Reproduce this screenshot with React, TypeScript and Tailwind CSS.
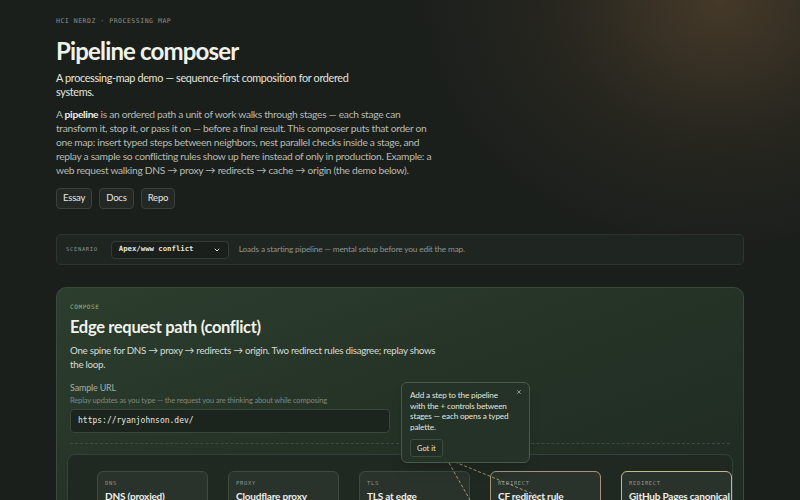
import { ChevronDown, X } from "lucide-react";

const stages = [
  { kind: "DNS", title: "DNS (proxied)", tone: "plain" },
  { kind: "PROXY", title: "Cloudflare proxy", tone: "plain" },
  { kind: "TLS", title: "TLS at edge", tone: "plain" },
  { kind: "REDIRECT", title: "CF redirect rule", tone: "warn" },
  { kind: "REDIRECT", title: "GitHub Pages canonical", tone: "warn2" },
];

const mono = "font-['DejaVu_Sans_Mono',monospace]";

function StageCard({ kind, title, tone }: { kind: string; title: string; tone: string }) {
  const border =
    tone === "warn"
      ? "border-[#a8937a]"
      : tone === "warn2"
        ? "border-[#c2b88a]"
        : "border-[#3d4a40]";
  return (
    <div className={`h-[60px] w-[111px] shrink-0 rounded-md border ${border} bg-[#2a322c] px-[7px] pt-[7px]`}>
      <div className={`${mono} text-[5.5px] leading-[8px] tracking-[0.12em] text-[#8d968d]`}>{kind}</div>
      <div className="mt-[3px] whitespace-nowrap text-[10px] font-bold leading-[12px] tracking-[-0.02em] text-[#eef0ea]">
        {title}
      </div>
    </div>
  );
}

export default function App() {
  return (
    <div className="relative h-[500px] w-[800px] overflow-hidden bg-[#1b1f1c] font-['Lato',sans-serif] text-[#e6e8e2]">
      {/* warm glow */}
      <div className="pointer-events-none absolute -right-[220px] -top-[250px] h-[500px] w-[600px] rounded-full bg-[radial-gradient(closest-side,rgba(80,64,44,0.8),rgba(60,50,36,0.35)_55%,rgba(27,31,28,0)_100%)]" />

      <div className="relative px-[56px] pt-[17px]">
        <div className={`${mono} text-[6.5px] leading-[8px] tracking-[0.08em] text-[#8b908a]`}>
          HCI NERDZ · PROCESSING MAP
        </div>
        <h1 className="mt-[11px] text-[24px] font-bold leading-[30px] tracking-[-0.035em] text-[#f0f2ec]">
          Pipeline composer
        </h1>
        <p className="mt-[5px] whitespace-nowrap text-[10.8px] leading-[14px] tracking-[-0.03em] text-[#e4e6df]">
          A processing-map demo — sequence-first composition for ordered
          <br />
          systems.
        </p>
        <p className="mt-[8px] whitespace-nowrap text-[10.25px] leading-[14px] tracking-[-0.03em] text-[#b6bab2]">
          A <b className="font-bold text-[#eef0ea]">pipeline</b> is an ordered path a unit of work walks through stages — each stage can
          <br />
          transform it, stop it, or pass it on — before a final result. This composer puts that order on
          <br />
          one map: insert typed steps between neighbors, nest parallel checks inside a stage, and
          <br />
          replay a sample so conflicting rules show up here instead of only in production. Example: a
          <br />
          web request walking DNS → proxy → redirects → cache → origin (the demo below).
        </p>
        <div className="mt-[11px] flex gap-[7px]">
          {["Essay", "Docs", "Repo"].map((l) => (
            <button
              key={l}
              className="h-[21px] rounded-[4px] border border-[#3a403b] bg-[#232825] px-[6px] text-[9.5px] tracking-[-0.02em] text-[#e6e8e2]"
            >
              {l}
            </button>
          ))}
        </div>

        {/* scenario bar */}
        <div className="mt-[25px] flex h-[31px] items-center gap-[13px] rounded-[5px] border border-[#2e352f] bg-[#1f2521] px-[9px]">
          <span className={`${mono} text-[5.5px] tracking-[0.12em] text-[#8d938c]`}>SCENARIO</span>
          <div className="flex h-[18px] w-[118px] items-center justify-between rounded-[4px] border border-[#343b35] bg-[#1a1f1b] px-[7px]">
            <span className={`${mono} whitespace-nowrap text-[7.3px] font-bold text-[#e2e4de]`}>
              Apex/www conflict
            </span>
            <ChevronDown size={8} strokeWidth={3} className="text-[#d8dad4]" />
          </div>
          <span className="-ml-[3px] whitespace-nowrap text-[8.3px] tracking-[-0.02em] text-[#8f948d]">
            Loads a starting pipeline — mental setup before you edit the map.
          </span>
        </div>

        {/* compose card */}
        <div className="mt-[22px] h-[260px] rounded-[10px] border border-[#3b4a3c] bg-[linear-gradient(160deg,#2c3e2e_0%,#253327_45%,#1f2a22_100%)] px-[13px] pt-[15px]">
          <div className={`${mono} text-[6px] leading-[8px] tracking-[0.1em] text-[#9bb77d]`}>COMPOSE</div>
          <h2 className="mt-[6px] text-[16.5px] font-bold leading-[20px] tracking-[-0.02em] text-[#f0f2ec]">
            Edge request path (conflict)
          </h2>
          <p className="mt-[6px] whitespace-nowrap text-[9.8px] leading-[14px] tracking-[-0.03em] text-[#d6dad2]">
            One spine for DNS → proxy → redirects → origin. Two redirect rules disagree; replay shows
            <br />
            the loop.
          </p>
          <div className="mt-[11px] text-[9px] leading-[12px] tracking-[-0.02em] text-[#a7aea5]">Sample URL</div>
          <div className="mt-[2px] whitespace-nowrap text-[7.5px] leading-[10px] tracking-[-0.02em] text-[#7f887e]">
            Replay updates as you type — the request you are thinking about while composing
          </div>
          <div className="mt-[3px] flex h-[24px] w-[320px] items-center rounded-[4px] border border-[#3b463c] bg-[#1c241e] px-[7px]">
            <span className={`${mono} text-[8px] text-[#e6e8e2]`}>https://ryanjohnson.dev/</span>
          </div>
          <div className="mt-[10px] border-t border-dashed border-[#3f4c40]" />

          {/* canvas */}
          <div className="-mx-[3px] mt-[10px] h-[80px] rounded-[8px] border border-[#34413a] bg-[#1f2821] pl-[29px] pt-[16px]">
            <div className="flex gap-[20px]">
              {stages.map((s, i) => (
                <StageCard key={i} {...s} />
              ))}
            </div>
          </div>
        </div>
      </div>

      {/* connector lines */}
      <svg className="pointer-events-none absolute left-0 top-0" width="800" height="500">
        <line x1="449" y1="463" x2="470" y2="500" stroke="#c2b27e" strokeWidth="0.8" strokeDasharray="3 2" />
        <line x1="455" y1="462" x2="548" y2="500" stroke="#c2b27e" strokeWidth="0.8" strokeDasharray="3 2" />
      </svg>

      {/* tooltip */}
      <div className="absolute left-[401px] top-[382px] h-[81px] w-[129px] rounded-[6px] border border-[#4a5a48] bg-[#253227] px-[8px] pt-[7px] shadow-lg">
        <button className="absolute right-[7px] top-[6px] text-[#cfd3cb]">
          <X size={6} strokeWidth={2.5} />
        </button>
        <p className="whitespace-nowrap text-[8.2px] leading-[10.7px] tracking-[-0.02em] text-[#e2e5de]">
          Add a step to the pipeline
          <br />
          with the <b className="text-[#a6d27a]">+</b> controls between
          <br />
          stages — each opens a typed
          <br />
          palette.
        </p>
        <button className="mt-[6px] h-[18px] rounded-[3px] border border-[#3e4b3f] bg-[#222d24] px-[6px] text-[7.5px] text-[#e2e5de]">
          Got it
        </button>
      </div>
    </div>
  );
}
